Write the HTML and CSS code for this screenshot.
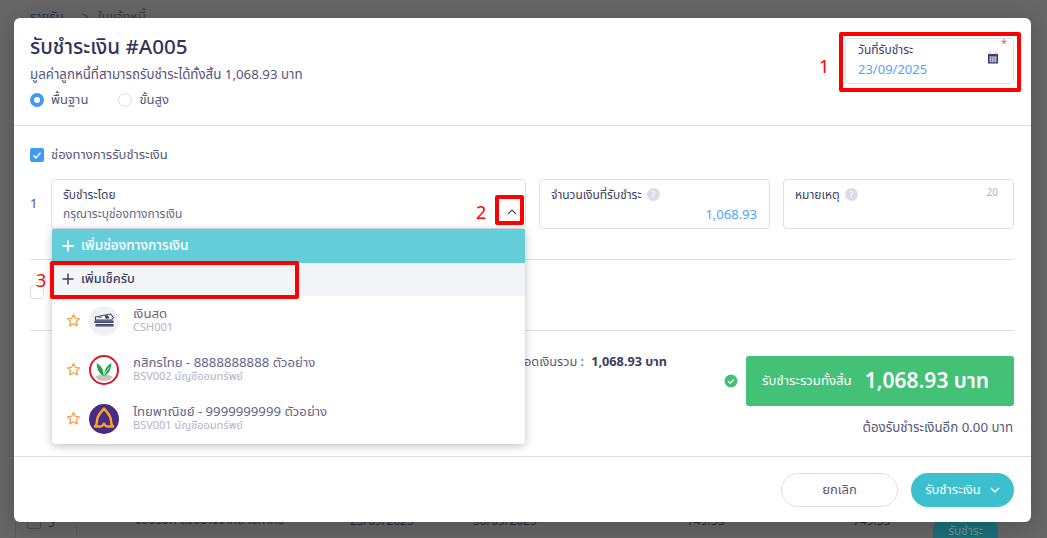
FILE: index.html
```html
<!DOCTYPE html>
<html lang="th">
<head>
    <meta charset="UTF-8">
    <title>รับชำระเงิน</title>
    <link rel="stylesheet" href="styles.css">
</head>
<body>

<div class="page">
    <div class="crumbs"><span class="crumb-link">รายรับ</span><span class="crumb-sep">&gt;</span><span>ใบแจ้งหนี้</span></div>
    <div class="table-row">
        <span class="row-check"></span>
        <span class="row-no">5</span>
        <span class="row-name">ชื่อบริษัท ตัวอย่างจำกัด ใบกำกับ</span>
        <span class="row-date">23/09/2025</span>
        <span class="row-date2">30/09/2025</span>
        <span class="row-num">749.53</span>
        <span class="row-num2">749.53</span>
        <span class="row-btn">รับชำระ</span>
    </div>
</div>

<div class="modal">
    <div class="modal-head">
        <div>
            <h1 class="title">รับชำระเงิน #A005</h1>
            <p class="subtitle">มูลค่าลูกหนี้ที่สามารถรับชำระได้ทั้งสิ้น 1,068.93 บาท</p>
            <div class="radios">
                <span class="radio on"></span><span class="radio-label">พื้นฐาน</span>
                <span class="radio"></span><span class="radio-label">ขั้นสูง</span>
            </div>
        </div>
        <div class="field date-field">
            <span class="field-label">วันที่รับชำระ</span>
            <span class="field-value blue">23/09/2025</span>
            <span class="req">*</span>
            <svg class="cal" viewBox="0 0 12 12" width="12" height="12">
                <rect x="1" y="2" width="10" height="9.5" fill="#2f3a6b"/>
                <rect x="2.5" y="0.5" width="1.2" height="2.5" fill="#8f93ad"/>
                <rect x="8.3" y="0.5" width="1.2" height="2.5" fill="#8f93ad"/>
                <path d="M2 5h8M2 7h8M2 9h8M3.5 4.5v6M5.3 4.5v6M7 4.5v6M8.7 4.5v6" stroke="#fff" stroke-width="0.6"/>
            </svg>
        </div>
    </div>

    <div class="modal-body">
        <label class="check-row">
            <span class="checkbox"><svg viewBox="0 0 14 14" width="14" height="14"><path d="M3.5 7.5l2.4 2.4 4.6-5.2" fill="none" stroke="#fff" stroke-width="1.5"/></svg></span>
            ช่องทางการรับชำระเงิน
        </label>

        <div class="pay-row">
            <span class="pay-no">1</span>
            <div class="field pay-select">
                <span class="field-label">รับชำระโดย</span>
                <span class="field-value muted">กรุณาระบุช่องทางการเงิน</span>
                <svg class="chev" viewBox="0 0 10 6" width="10" height="6"><path d="M1 5l4-4 4 4" fill="none" stroke="#4a4a68" stroke-width="1.2"/></svg>

                <div class="dropdown">
                    <div class="dd-add teal"><svg class="plus" viewBox="0 0 12 12" width="12" height="12"><path d="M6 .5v11M.5 6h11" stroke="#fff" stroke-width="1.8"/></svg>เพิ่มช่องทางการเงิน</div>
                    <div class="dd-add grey"><svg class="plus" viewBox="0 0 12 12" width="12" height="12"><path d="M6 .5v11M.5 6h11" stroke="#3e3d62" stroke-width="1.5"/></svg>เพิ่มเช็ครับ</div>

                    <div class="dd-item">
                        <svg class="star" viewBox="0 0 16 16" width="15" height="15"><path d="M8 1.6l1.9 4.1 4.5.5-3.3 3 .9 4.5L8 11.500l-4 2.200.9-4.500-3.300-3 4.500-.5z" fill="none" stroke="#f9a24b" stroke-width="1.4" stroke-linejoin="round"/></svg>
                        <svg class="logo" viewBox="0 0 30 30" width="30" height="30">
                            <circle cx="15" cy="15" r="15" fill="#f1f1f3"/>
                            <path d="M6.500 11l15-3 3 3.500-2 2.500H6.500z" fill="#fff" stroke="#3a3d68" stroke-width="1.100"/>
                            <path d="M9 12l4-1M16 9.500l3 .5 1 2-3 .5z" fill="#3a3d68" stroke="#3a3d68" stroke-width=".7"/>
                            <path d="M5.500 14.500h19v2.600h-19zM6.500 18h18v2.600h-18z" fill="#3a3d68"/>
                            <path d="M5.500 15.800h19M6.500 19.300h18" stroke="#8d8fab" stroke-width=".5"/>
                        </svg>
                        <div class="dd-text">
                            <span class="dd-name">เงินสด</span>
                            <span class="dd-code">CSH001</span>
                        </div>
                    </div>

                    <div class="dd-item">
                        <svg class="star" viewBox="0 0 16 16" width="15" height="15"><path d="M8 1.6l1.9 4.1 4.5.5-3.3 3 .9 4.5L8 11.500l-4 2.200.9-4.500-3.300-3 4.500-.5z" fill="none" stroke="#f9a24b" stroke-width="1.4" stroke-linejoin="round"/></svg>
                        <svg class="logo" viewBox="0 0 30 30" width="30" height="30">
                            <circle cx="15" cy="15" r="14" fill="#fff" stroke="#d8172f" stroke-width="2"/>
                            <path d="M6.500 22c2-3 15-3 17 0-1.500 2.500-4.500 4-8.500 4s-7-1.500-8.500-4z" fill="#c9c5bd"/>
                            <path d="M14.500 21c.3-4-.3-9-6.800-13 0 5.500 2 10.500 6.800 13z" fill="#19a84b"/>
                            <path d="M15.500 21c-.3-4 .3-9 6.800-13 0 5.500-2 10.500-6.800 13z" fill="#19a84b"/>
                            <path d="M16 19.500c.8-3 2.500-5.500 4.500-7" stroke="#fff" stroke-width="0.8" fill="none"/>
                        </svg>
                        <div class="dd-text">
                            <span class="dd-name">กสิกรไทย - 8888888888 ตัวอย่าง</span>
                            <span class="dd-code">BSV002 บัญชีออมทรัพย์</span>
                        </div>
                    </div>

                    <div class="dd-item">
                        <svg class="star" viewBox="0 0 16 16" width="15" height="15"><path d="M8 1.6l1.9 4.1 4.5.5-3.3 3 .9 4.5L8 11.500l-4 2.200.9-4.500-3.300-3 4.500-.5z" fill="none" stroke="#f9a24b" stroke-width="1.4" stroke-linejoin="round"/></svg>
                        <svg class="logo" viewBox="0 0 30 30" width="30" height="30">
                            <circle cx="15" cy="15" r="15" fill="#4a2a82"/>
                            <path d="M15 4.500c-2.500 3.500-7 6.500-7 12.500 0 2.500-.7 4.200-2 5.500h5.500c1.500 0 2.500-1 3.500-3 1 2 2 3 3.500 3H24c-1.300-1.300-2-3-2-5.500 0-6-4.500-9-7-12.500z" fill="none" stroke="#f5a623" stroke-width="2.500" stroke-linejoin="round"/>
                        </svg>
                        <div class="dd-text">
                            <span class="dd-name">ไทยพาณิชย์ - 9999999999 ตัวอย่าง</span>
                            <span class="dd-code">BSV001 บัญชีออมทรัพย์</span>
                        </div>
                    </div>
                </div>
            </div>
            <div class="field pay-amount">
                <span class="field-label">จำนวนเงินที่รับชำระ <span class="help">?</span></span>
                <span class="field-value blue right">1,068.93</span>
            </div>
            <div class="field pay-note">
                <span class="field-label">หมายเหตุ <span class="help">?</span></span>
                <span class="count">20</span>
            </div>
        </div>

        <div class="extra-row">
            <span class="checkbox empty"></span>
        </div>

        <div class="summary">
            <div class="sum-left">ยอดเงินรวม : <b>1,068.93 บาท</b></div>
            <div class="sum-right">
                <div class="sum-total">
                    <svg class="ok" viewBox="0 0 14 14" width="14" height="14"><circle cx="7" cy="7" r="6.500" fill="#43c177"/><path d="M4.200 7.200l2 1.900 3.500-3.500" fill="none" stroke="#fff" stroke-width="1.300"/></svg>
                    <div class="total-box"><span class="total-label">รับชำระรวมทั้งสิ้น</span><span class="total-value">1,068.93 บาท</span></div>
                </div>
                <p class="remain">ต้องรับชำระเงินอีก 0.00 บาท</p>
            </div>
        </div>
    </div>

    <div class="modal-foot">
        <button class="btn cancel">ยกเลิก</button>
        <button class="btn submit">รับชำระเงิน
            <svg viewBox="0 0 10 6" width="10" height="6"><path d="M1 1l4 4 4-4" fill="none" stroke="#fff" stroke-width="1.400"/></svg>
        </button>
    </div>

    <div class="mark mark-1"></div><span class="mark-no no-1">1</span>
    <div class="mark mark-2"></div><span class="mark-no no-2">2</span>
    <div class="mark mark-3"></div><span class="mark-no no-3">3</span>
</div>

</body>
</html>
```

FILE: styles.css
```css
*{
    box-sizing: border-box;
}
html,body{
    height: 100%;
}
body{
    margin: 0;
    background-color: #666666;
    font-family: "Noto Sans", "Noto Sans Thai", "DejaVu Sans", sans-serif;
    font-size: 13px;
    color: #34325c;
    overflow: hidden;
}

/* page dimmed behind the modal */
.page{
    height: 538px;
    display: flex;
    flex-direction: column;
    justify-content: space-between;
    color: #2b2b38;
}
.crumbs{
    display: flex;
    padding: 6px 0 0 30px;
    font-size: 13px;
    line-height: 20px;
    color: #3a3a40;
}
.crumb-link{
    color: #283350;
}
.crumb-sep{
    margin: 0 9px 0 18px;
}
.table-row{
    display: flex;
    align-items: center;
    height: 32px;
    padding-bottom: 4px;
    margin-left: 15px;
    border-left: 1px solid #5c5c5c;
    font-size: 12px;
}
.table-row span{
    flex-shrink: 0;
}
.row-check{
    width: 14px;
    height: 14px;
    margin: 4px 0 0 11px;
    border: 1px solid #4c4c4c;
    border-radius: 2px;
}
.row-no{
    margin-left: 7px;
    width: 29px;
    height: 32px;
    margin-right: 58px;
    padding-top: 10px;
    border-right: 1px solid #5c5c5c;
}
.row-name{
    width: 215px;
}
.row-date{
    width: 123px;
}
.row-date2{
    width: 214px;
}
.row-num{
    width: 166px;
}
.row-num2{
    width: 80px;
}
.row-btn{
    width: 65px;
    height: 34px;
    margin-top: 26px;
    border-radius: 14px;
    background: #1b6f78;
    color: #6d9397;
    text-align: center;
    line-height: 30px;
}

/* modal */
.modal{
    position: absolute;
    left: 14px;
    top: 18px;
    width: 1017px;
    height: 504px;
    background: #fff;
    border-radius: 6px;
    display: flex;
    flex-direction: column;
    box-shadow: 0 4px 24px rgba(0,0,0,.2);
}
.modal-head{
    height: 108px;
    padding: 12px 17px 0 16px;
    border-bottom: 1px solid #dfdfe8;
    display: flex;
    justify-content: space-between;
    flex-shrink: 0;
}
.title{
    margin: 0;
    font-size: 20.600px;
    font-weight: 500;
    line-height: 32px;
}
.subtitle{
    margin: 1px 0 0;
    font-size: 13.300px;
    line-height: 22px;
    color: #56557a;
}
.radios{
    display: flex;
    align-items: center;
    height: 26px;
    margin-top: 2px;
    color: #56557a;
}
.radio{
    width: 14px;
    height: 14px;
    border: 1px solid #dcdce8;
    border-radius: 50%;
    margin-right: 7px;
}
.radio.on{
    border: 4px solid #3f9bf5;
}
.radio-label{
    margin-right: 30px;
}

.field{
    border: 1px solid #dfdfe8;
    border-radius: 4px;
    padding: 5px 12px 5px 11px;
    position: relative;
    display: flex;
    flex-direction: column;
    background: #fff;
}
.field-label{
    font-size: 12px;
    line-height: 19px;
    color: #3e3d62;
    display: flex;
    align-items: center;
    gap: 5px;
}
.field-value{
    line-height: 20px;
    font-size: 13px;
}
.blue{
    color: #4fa5f6;
}
.muted{
    font-size: 12px;
    color: #66658a;
}
.right{
    text-align: right;
}
.date-field{
    width: 169px;
    height: 46px;
    margin-top: 8px;
    padding: 1px 12px 0;
}
.req{
    position: absolute;
    top: -3px;
    right: 6px;
    color: #ee5b4f;
    font-size: 11px;
    line-height: 14px;
}
.cal{
    position: absolute;
    right: 14px;
    top: 13px;
}

.modal-body{
    flex: 1;
    padding: 0 17px 0 16px;
}
.check-row{
    height: 53px;
    display: flex;
    align-items: center;
    gap: 7px;
    padding-top: 4px;
    color: #56557a;
}
.checkbox{
    width: 14px;
    height: 14px;
    border-radius: 2px;
    background: #3f9bf5;
    display: block;
}
.checkbox.empty{
    background: #fff;
    border: 1px solid #dfdfe8;
}
.pay-row{
    display: flex;
    gap: 13px;
    height: 81px;
    border-bottom: 1px solid #dfdfe8;
}
.pay-no{
    width: 8px;
    line-height: 48px;
    color: #56557a;
}
.pay-row .field{
    height: 50px;
}
.pay-select{
    width: 475px;
}
.pay-amount,.pay-note{
    width: 231px;
}
.chev{
    position: absolute;
    right: 8px;
    top: 29px;
}
.help{
    width: 13px;
    height: 13px;
    border-radius: 50%;
    background: #dcdce8;
    color: #fff;
    font-size: 9px;
    line-height: 13px;
    text-align: center;
}
.count{
    position: absolute;
    right: 15px;
    top: 5px;
    font-size: 10px;
    color: #b3b3c4;
}

/* dropdown */
.dropdown{
    position: absolute;
    left: 0;
    right: 0;
    top: calc(100% + 1px);
    height: 215px;
    background: #fff;
    border-radius: 0 0 4px 4px;
    box-shadow: 0 2px 8px rgba(0,0,0,.25);
    z-index: 2;
}
.dd-add{
    display: flex;
    align-items: center;
    padding-left: 10px;
    font-weight: 500;
}
.plus{
    margin-right: 7px;
}
.dd-add.teal{
    height: 34px;
    padding-bottom: 1px;
    background: #64ced8;
    color: #fff;
    font-size: 13.700px;
}
.dd-add.grey{
    height: 33px;
    padding-bottom: 2px;
    background: #f3f4f7;
    color: #3e3d62;
    font-size: 12.800px;
}
.dd-item{
    display: flex;
    align-items: center;
    height: 49px;
    padding-left: 14px;
}
.logo{
    margin-left: 8px;
    margin-right: 14px;
}
.dd-text{
    display: flex;
    flex-direction: column;
    margin-top: -3px;
}
.dd-name{
    font-size: 13.200px;
    line-height: 15px;
    color: #66658a;
}
.dd-code{
    font-size: 11px;
    line-height: 11px;
    color: #b3b3c8;
}

.extra-row{
    height: 71px;
    padding-top: 25px;
    border-bottom: 1px solid #dfdfe8;
}

/* summary */
.summary{
    display: flex;
    justify-content: flex-end;
    gap: 57px;
    padding-top: 25px;
}
.sum-left{
    margin-top: -4px;
    font-size: 12.700px;
    line-height: 18px;
    color: #56557a;
}
.sum-left b{
    margin-left: 4px;
    color: #3e3d62;
}
.sum-right{
    width: 290px;
}
.sum-total{
    display: flex;
    align-items: center;
    gap: 8px;
}
.ok{
    flex-shrink: 0;
}
.total-box{
    width: 268px;
    height: 50px;
    flex-shrink: 0;
    background: #43c177;
    border-radius: 3px;
    color: #fff;
    display: flex;
    align-items: center;
    gap: 13px;
    padding-left: 16px;
}
.total-label{
    font-size: 13.200px;
}
.total-value{
    font-size: 21px;
    font-weight: 600;
}
.remain{
    margin: 11px 1px 0 0;
    text-align: right;
    font-size: 13.300px;
    line-height: 20px;
    color: #56557a;
}

.modal-foot{
    height: 66px;
    flex-shrink: 0;
    border-top: 1px solid #dfdfe8;
    display: flex;
    justify-content: flex-end;
    align-items: center;
    gap: 13px;
    padding: 0 17px 0 0;
}
.btn{
    height: 34px;
    border-radius: 17px;
    font-family: inherit;
    font-size: 13px;
}
.cancel{
    width: 117px;
    background: #fff;
    border: 1px solid #dfdfe8;
    color: #56557a;
}
.submit{
    width: 103px;
    background: #3cc0cd;
    border: 0;
    color: #fff;
    display: flex;
    align-items: center;
    justify-content: center;
    gap: 9px;
}

/* red annotations drawn over the screenshot */
.mark{
    position: absolute;
    border: 4px solid #f00;
    border-radius: 2px;
    z-index: 3;
}
.mark-1{
    left: 825px;
    top: 14px;
    width: 182px;
    height: 60px;
}
.mark-2{
    left: 481px;
    top: 177px;
    width: 29px;
    height: 30px;
}
.mark-3{
    left: 36px;
    top: 243px;
    width: 249px;
    height: 38px;
}
.mark-no{
    position: absolute;
    color: #f00;
    font-size: 18px;
    line-height: 20px;
    z-index: 3;
}
.no-1{
    left: 805px;
    top: 38px;
}
.no-2{
    left: 462px;
    top: 184px;
}
.no-3{
    left: 22px;
    top: 252px;
}
```
